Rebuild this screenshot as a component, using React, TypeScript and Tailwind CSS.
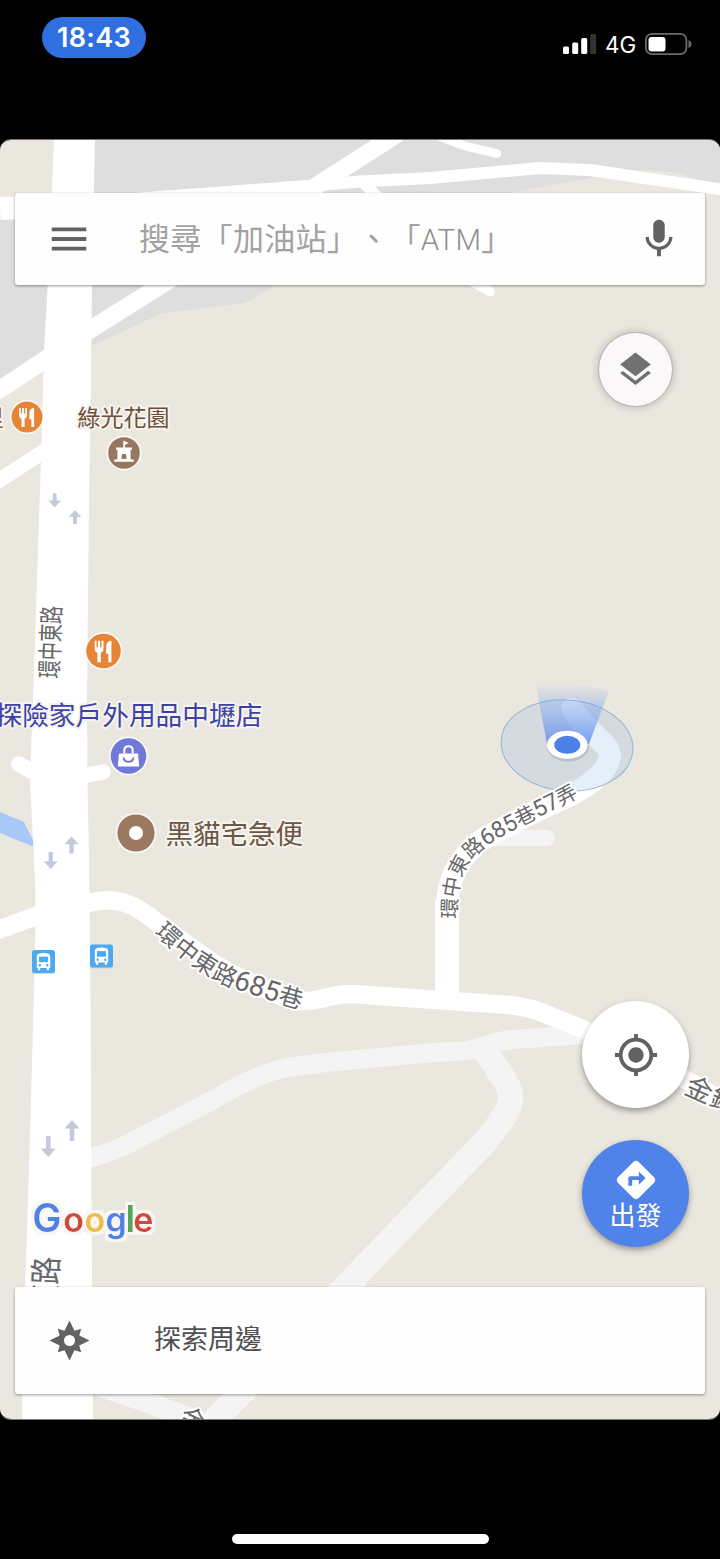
import { MdDirections, MdGpsFixed, MdLayers, MdMenu } from 'react-icons/md'

interface Arrow {
  x: number
  y: number
  w: number
  h: number
  down?: boolean
}

const arrows: Arrow[] = [
  { x: 54.7, y: 493.5, w: 12.5, h: 14, down: true },
  { x: 75, y: 510, w: 12.5, h: 14 },
  { x: 71.5, y: 836.5, w: 14, h: 17 },
  { x: 50.7, y: 852, w: 14, h: 17, down: true },
  { x: 72, y: 1120, w: 15, h: 21 },
  { x: 48.3, y: 1136, w: 15, h: 21, down: true },
]

const logo = [
  { char: 'G', x: 32.3, size: 39, color: '#4f82e6' },
  { char: 'o', x: 63.2, size: 34, color: '#cf4a3d' },
  { char: 'o', x: 84.4, size: 34, color: '#eebd45' },
  { char: 'g', x: 105.5, size: 34, color: '#4f82e6' },
  { char: 'l', x: 125.5, size: 37, color: '#56a55b' },
  { char: 'e', x: 133.2, size: 34, color: '#cf4a3d' },
]

function RoadArrow({ x, y, w, h, down }: Arrow) {
  const half = w / 2
  const stem = w * 0.15
  const head = w * 0.56
  const d = `M0 0L${half} ${head}H${stem}V${h}H${-stem}V${head}H${-half}Z`
  return (
    <path
      d={d}
      fill="#c4c8da"
      transform={down ? `translate(${x} ${y + h}) scale(1 -1)` : `translate(${x} ${y})`}
    />
  )
}

function FoodPin({ x, y, r }: { x: number; y: number; r: number }) {
  return (
    <g transform={`translate(${x} ${y}) scale(${r / 17})`}>
      <circle r="18.6" fill="#fff" opacity="0.8" />
      <circle r="17" fill="#e58535" />
      <path
        d="M-8.6-10h1.8v6.2h1.4V-10h2v6.2H-2V-10H0v8c0 2.2-1.2 3.2-2.6 3.8V11h-3.4V1.8C-7.6 1.2-8.6 0-8.6-2zM7.8-10V11H4.8V2.6H2.6V-4C2.6-7.6 4.6-10 7.8-10z"
        fill="#fff"
      />
    </g>
  )
}

function BusStop({ x, y }: { x: number; y: number }) {
  return (
    <g transform={`translate(${x} ${y})`}>
      <rect y="1" width="23" height="23" rx="2.5" fill="#c9cdd0" opacity="0.7" />
      <rect width="23" height="23" rx="2.5" fill="#4eaaf0" />
      <path
        d="M4.8 6.5C4.8 4 7.5 3 11.5 3s6.7 1 6.7 3.5V18h-1.1v2.2h-2.3V18H8.2v2.2H5.9V18H4.8z"
        fill="#fff"
      />
      <path d="M7 6.6h9v5.6H7z" fill="#4eaaf0" />
      <circle cx="7.8" cy="15.2" r="1.2" fill="#4eaaf0" />
      <circle cx="15.2" cy="15.2" r="1.2" fill="#4eaaf0" />
    </g>
  )
}

function MapCanvas() {
  return (
    <svg
      className="absolute inset-0 h-full w-full font-['Roboto','Noto_Sans_CJK_TC',sans-serif]"
      viewBox="0 140 720 1279"
      preserveAspectRatio="none"
    >
      <defs>
        <linearGradient id="beam" x1="0" y1="0" x2="0" y2="1">
          <stop offset="0" stopColor="#7fa6ee" stopOpacity="0" />
          <stop offset="0.3" stopColor="#7fa6ee" stopOpacity="0.35" />
          <stop offset="1" stopColor="#5b8aec" stopOpacity="0.8" />
        </linearGradient>
        <filter id="halo" x="-10%" y="-20%" width="120%" height="140%">
          <feMorphology in="SourceAlpha" operator="dilate" radius="2.5" />
          <feGaussianBlur stdDeviation="0.7" result="spread" />
          <feFlood floodColor="#f8f7f4" />
          <feComposite in2="spread" operator="in" />
          <feMerge>
            <feMergeNode />
            <feMergeNode in="SourceGraphic" />
          </feMerge>
        </filter>
        <path id="lane57" d="M457 919C457 880 463 864 483 849C503 833 545 816 600 785" />
        <path id="lane685" d="M154 933C185 963 215 983 245 992C270 1001 295 1008 335 1018" />
      </defs>

      <rect y="139" width="720" height="1281" fill="#eae7df" />

      {/* Built-up areas */}
      <g fill="#dedede">
        <path d="M80 139H720V188L700 180L676 173L650 170L600 177L540 187L505 194L400 240L272 287L247 302Q240 304 233 304.500L163 313L143 322L80 351Z" />
        <path d="M0 210H60V350L0 384Z" />
      </g>
      <path d="M0 812L24 822L34 842V847L0 833Z" fill="#a8c9f8" />

      {/* Minor roads */}
      <g fill="none" stroke="#f4f4f4" strokeLinejoin="round">
        <path d="M80 1160Q105 1155 122 1147L213 1100Q260 1072 290 1067L330 1062L440 1052Q470 1052 484 1046Q500 1040 520 1039L590 1034" strokeWidth="19" />
        <path d="M485 1050L505 1081Q515 1096 507 1111Q500 1124 485 1142L345 1287L205 1430" strokeWidth="25" />
        <path d="M85 1381L150 1403L210 1426" strokeWidth="21" />
        <path d="M485 838H547" strokeWidth="16" strokeLinecap="round" />
      </g>

      {/* Streets */}
      <g fill="none" stroke="#fff" strokeLinejoin="round">
        <path d="M0 208.500L60 206" strokeWidth="23" />
        <path d="M60 205L160 197L307 186L360 181.500L430 178L540 168L590 170L722 189.500" strokeWidth="12" />
        <path d="M405 129L160 286L92 328.500L43 361L-4 392" strokeWidth="17.500" />
        <path d="M-4 482.500L46 450" strokeWidth="15" />
        <path d="M432 134L465 146L497 153.500" strokeWidth="8.500" strokeLinecap="round" />
        <path d="M361 181L380 199" strokeWidth="11" />
        <path d="M470 280L490 291.500" strokeWidth="10" strokeLinecap="round" />
        <path d="M19 764L40 776M85 775.500L103 772" strokeWidth="15.500" strokeLinecap="round" />
        <path d="M-5 931L36 916Q70 904 91 902.500Q117 896 138 909Q150 916 155 921L200 954Q225 972 250 982L290 1000Q300 1003 320 999Q338 994 353 994L437 1000L510 1005Q530 1007 548 1015L585 1030L690 1082L730 1105" strokeWidth="18.500" />
        <path d="M447 985V905Q448 868 478 843Q495 830 560 800Q590 787 604 770Q614 756 606 746Q582 723 572 709" strokeWidth="22" strokeLinecap="round" />
        <path d="M447 1000V900" strokeWidth="24" />
      </g>
      <path
        d="M54 139L48 280L44 350L41 460L33 700L30 780L32 820L35.500 890V930L31 1100L28 1200L25 1290L22 1420H93L91.500 1200L90.500 1000L89 860L87.500 780L87 700L89 500L91 380L92 280L95 139Z"
        fill="#fff"
      />

      {arrows.map((arrow) => (
        <RoadArrow key={arrow.y} {...arrow} />
      ))}

      {/* Current position */}
      <ellipse cx="567" cy="745.500" rx="66" ry="45.500" transform="rotate(5 567 745.500)" fill="rgba(118,172,230,0.19)" stroke="#92b4d8" strokeWidth="1" />
      <path d="M536 685Q572 680 609 691L589 744H547Z" fill="url(#beam)" />
      <ellipse cx="568" cy="747" rx="21" ry="14.500" fill="#7c8590" opacity="0.3" />
      <ellipse cx="567.300" cy="744.800" rx="20.300" ry="14" fill="#fff" />
      <ellipse cx="567.300" cy="744.800" rx="13" ry="9" fill="#4d80e9" />

      {/* Road names */}
      <g fill="#68686a" stroke="#fff" strokeWidth="4" strokeLinejoin="round" paintOrder="stroke">
        <text transform="translate(58.500 678.500) rotate(-88) scale(0.71 1)" fontSize="25.500">環中東路</text>
        <text transform="translate(56.500 1312.500) rotate(-88) scale(0.84 1)" fontSize="33">東路</text>
        <text fontSize="20.500">
          <textPath href="#lane57">
            環中東路<tspan fontSize="23">685</tspan>巷<tspan fontSize="23">57</tspan>弄
          </textPath>
        </text>
        <text fontSize="24">
          <textPath href="#lane685">
            環中東路<tspan fontSize="28">685</tspan>巷
          </textPath>
        </text>
        <text transform="translate(683 1093) rotate(24)" fontSize="27">金鋒</text>
        <text transform="translate(177 1424) rotate(24)" fontSize="27">金</text>
      </g>

      {/* Places */}
      <g stroke="#f6f4ef" strokeWidth="4" strokeLinejoin="round" paintOrder="stroke">
        <text x="-19" y="425.500" fontSize="23" fill="#a05a2c">里</text>
        <text x="77.500" y="425.500" fontSize="23" fill="#6e4e3a">綠光花園</text>
        <text x="-4.500" y="724.500" fontSize="26.700" fill="#3c42a8">探險家戶外用品中壢店</text>
        <text x="165.500" y="843.500" fontSize="27.500" fill="#6e5644">黑貓宅急便</text>
      </g>
      <FoodPin x={27} y={417} r={15.5} />
      <FoodPin x={103.5} y={651} r={17.3} />

      <g transform="translate(124 453)">
        <circle r="17.500" fill="#fff" opacity="0.8" />
        <circle r="15.800" fill="#97765f" />
        <path d="M-.7-12.500L4.600-10L.9-8V-5.500H8V-3.200H6.600V6.500H9.800V8.800H-9.800V6.500H-6.600V-3.200H-8V-5.500H-.7Z" fill="#fff" />
        <path d="M-2.400 6V3Q-2.400 .8 0 .8T2.400 3V6Z" fill="#97765f" />
      </g>

      <g transform="translate(128.500 756)">
        <circle r="19.500" fill="#fff" opacity="0.8" />
        <circle r="17.800" fill="#7079da" />
        <path d="M-9.500-2.500H9.500L10.700 10.500H-10.700Z" fill="#fff" />
        <path d="M-4.200-2.500V-5.500Q-4.200-9.800 0-9.800T4.200-5.500V-2.500" fill="none" stroke="#fff" strokeWidth="2" />
        <path d="M-4.800 2.200Q-4 5.800 0 5.800T4.800 2.200" fill="none" stroke="#7079da" strokeWidth="2" strokeLinecap="round" />
      </g>

      <circle cx="136" cy="833" r="20.300" fill="#fff" opacity="0.8" />
      <circle cx="136" cy="833" r="18.600" fill="#9a7960" />
      <circle cx="136" cy="833" r="7" fill="#fff" />

      <BusStop x={32} y={950} />
      <BusStop x={90} y={944.5} />

      <g fontFamily="Inter, sans-serif" fontWeight="600" filter="url(#halo)">
        {logo.map(({ char, x, size, color }) => (
          <text key={x} x={x} y="1232.300" fontSize={size} fill={color}>{char}</text>
        ))}
      </g>
    </svg>
  )
}

function StatusBar() {
  return (
    <header className="flex h-[139px] items-start justify-between pl-[42px] pr-[28px] font-['Inter',sans-serif] text-white">
      <div className="mt-[16.5px] flex h-[41px] w-[104px] items-center justify-center rounded-[20.5px] bg-[#306fe0] pt-px text-[27px] font-semibold leading-none tracking-[0.3px]">
        18:43
      </div>
      <div className="mt-[33px] flex h-[22px] items-center">
        <svg className="h-[22px] w-[34px]" viewBox="0 0 34 22">
          <rect y="13.500" width="6" height="7.500" rx="1.500" fill="#fff" />
          <rect x="9.200" y="9.500" width="6" height="11.500" rx="1.500" fill="#fff" />
          <rect x="18.200" y="5" width="6" height="16" rx="1.500" fill="#fff" />
          <rect x="27.200" y="1" width="6" height="20" rx="1.500" fill="#333" />
        </svg>
        <span className="ml-[8px] w-[31px] pt-[2px] text-[22.5px] leading-none">4G</span>
        <svg className="ml-[9px] h-[22px] w-[47px]" viewBox="0 0 47 22">
          <rect x="0.900" y="0.900" width="40.500" height="20.200" rx="6" fill="none" stroke="#6b6b6b" strokeWidth="1.800" />
          <rect x="3.500" y="4" width="17" height="14.500" rx="3" fill="#fff" />
          <path d="M43.500 7Q46.500 8 46.500 11T43.500 15Z" fill="#6b6b6b" />
        </svg>
      </div>
    </header>
  )
}

export default function App() {
  return (
    <div className="flex h-[1559px] w-[720px] flex-col overflow-hidden bg-black font-['Roboto','Noto_Sans_CJK_TC',sans-serif]">
      <StatusBar />

      <main className="relative h-[1281px] overflow-hidden rounded-[11px] border-y border-[#7a7976]">
        <MapCanvas />

        <div className="relative flex h-full flex-col">
          <div className="mx-[15px] mt-[53px] flex h-[92px] shrink-0 items-center rounded-[3px] bg-[#fefefe] pl-[31px] pr-[23.5px] shadow-[0_1px_3px_rgba(0,0,0,0.4)]">
            <MdMenu className="size-[46px] text-[#626262]" />
            <span className="ml-[47px] flex-1 whitespace-nowrap pt-px text-[31px] leading-none tracking-[0.3px] text-[#a2a2a2] [text-spacing-trim:space-all]">
              搜尋「加油站」、「<span className="text-[29.5px] font-light text-[#8e8e8e]">ATM</span>」
            </span>
            <svg className="size-[46px]" viewBox="0 0 24 24" fill="#626262">
              <path d="M12 14c1.660 0 2.990-1.340 2.990-3L15 5c0-1.660-1.340-3-3-3S9 3.340 9 5v6c0 1.660 1.340 3 3 3zm5.300-3c0 3-2.540 5.100-5.300 5.100S6.700 14 6.700 11H5c0 3.410 2.720 6.230 6 6.720V21h2v-3.280c3.280-.48 6-3.300 6-6.720h-1.700z" />
            </svg>
          </div>

          <button className="mr-[47px] mt-[47px] flex size-[75px] shrink-0 items-center justify-center self-end rounded-full border border-[#b4b2b2] bg-[#faf8f9] shadow-[0_0_8px_rgba(0,0,0,0.22)]">
            <MdLayers className="size-[41px] text-[#717171]" />
          </button>

          <button className="mr-[31px] mt-[594px] flex size-[107px] shrink-0 items-center justify-center self-end rounded-full bg-white shadow-[0_3px_6px_rgba(0,0,0,0.35)]">
            <MdGpsFixed className="size-[46px] text-[#626262]" />
          </button>

          <button className="mr-[31px] mt-[32px] flex size-[107px] shrink-0 flex-col items-center self-end rounded-full bg-[#5083ea] pt-[17px] text-white shadow-[0_3px_6px_rgba(0,0,0,0.35)]">
            <MdDirections className="size-[46px]" />
            <span className="text-[26px] leading-[26px]">出發</span>
          </button>

          <div className="mx-[15px] mt-[39.5px] flex h-[107px] shrink-0 items-center rounded-[3px] bg-[#fefefe] pl-[34px] shadow-[0_1px_3px_rgba(0,0,0,0.4)]">
            <svg className="size-[41px]" viewBox="-20.500 -20.500 41 41" fill="#626262">
              <path
                fillRule="evenodd"
                d="M0-20L5-9.800L11.700-11.700L9.800-5L20 0L9.800 5L11.700 11.700L5 9.800L0 20L-5 9.800L-11.700 11.700L-9.800 5L-20 0L-9.800-5L-11.700-11.700L-5-9.800ZM-5.500 0A5.500 5.500 0 1 0 5.500 0A5.500 5.500 0 1 0 -5.500 0Z"
              />
            </svg>
            <span className="ml-[64px] pt-px text-[27px] leading-none text-[#505050]">探索周邊</span>
          </div>
        </div>
      </main>

      <div className="mx-auto mt-[114px] h-[10px] w-[257px] rounded-full bg-white" />
    </div>
  )
}
